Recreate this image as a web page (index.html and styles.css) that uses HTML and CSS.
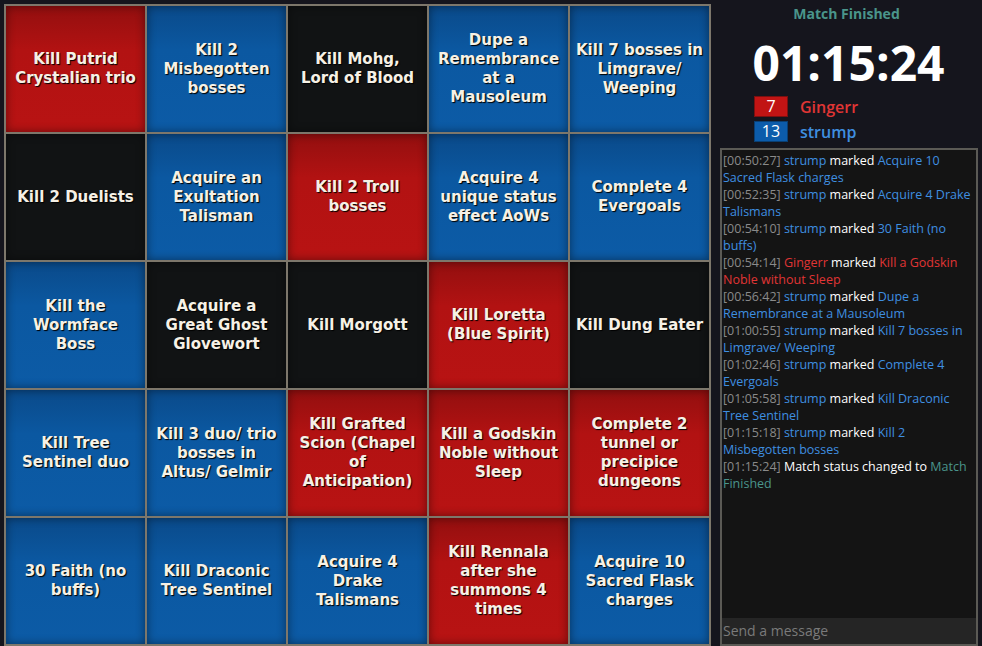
FILE: index.html
```html
<!DOCTYPE html>
<html>
<head>
<meta charset="utf-8">
<link rel="stylesheet" href="styles.css">
</head>
<body>
<div class="board">
  <div class="cell red"><span>Kill Putrid Crystalian trio</span></div>
  <div class="cell blue"><span>Kill 2 Misbegotten bosses</span></div>
  <div class="cell black"><span>Kill Mohg,<br>Lord of Blood</span></div>
  <div class="cell blue"><span>Dupe a Remembrance at a Mausoleum</span></div>
  <div class="cell blue"><span>Kill 7 bosses in Limgrave/ Weeping</span></div>

  <div class="cell black"><span>Kill 2 Duelists</span></div>
  <div class="cell blue"><span>Acquire an Exultation Talisman</span></div>
  <div class="cell red"><span>Kill 2 Troll bosses</span></div>
  <div class="cell blue"><span>Acquire 4 unique status effect AoWs</span></div>
  <div class="cell blue"><span>Complete 4 Evergoals</span></div>

  <div class="cell blue"><span>Kill the Wormface Boss</span></div>
  <div class="cell black"><span>Acquire a Great Ghost Glovewort</span></div>
  <div class="cell black"><span>Kill Morgott</span></div>
  <div class="cell red"><span>Kill Loretta (Blue Spirit)</span></div>
  <div class="cell black"><span>Kill Dung Eater</span></div>

  <div class="cell blue"><span>Kill Tree Sentinel duo</span></div>
  <div class="cell blue"><span>Kill 3 duo/ trio bosses in Altus/ Gelmir</span></div>
  <div class="cell red"><span>Kill Grafted Scion (Chapel of Anticipation)</span></div>
  <div class="cell red"><span>Kill a Godskin Noble without Sleep</span></div>
  <div class="cell red"><span>Complete 2 tunnel or precipice dungeons</span></div>

  <div class="cell blue"><span>30 Faith (no buffs)</span></div>
  <div class="cell blue"><span>Kill Draconic Tree Sentinel</span></div>
  <div class="cell blue"><span>Acquire 4 Drake Talismans</span></div>
  <div class="cell red"><span>Kill Rennala after she summons 4 times</span></div>
  <div class="cell blue"><span>Acquire 10 Sacred Flask charges</span></div>
</div>

<div class="side">
  <div class="status">Match Finished</div>
  <div class="timer">01:15:24</div>
  <div class="scores">
    <div class="score"><span class="badge badge-red">7</span><span class="pname p-red">Gingerr</span></div>
    <div class="score"><span class="badge badge-blue">13</span><span class="pname p-blue">strump</span></div>
  </div>
  <div class="chat">
    <div class="log">
      <div class="entry"><span class="ts">[00:50:27]</span> <span class="c-blue">strump</span> <span class="c-white">marked</span> <span class="c-blue">Acquire 10 Sacred Flask charges</span></div>
      <div class="entry"><span class="ts">[00:52:35]</span> <span class="c-blue">strump</span> <span class="c-white">marked</span> <span class="c-blue">Acquire 4 Drake Talismans</span></div>
      <div class="entry"><span class="ts">[00:54:10]</span> <span class="c-blue">strump</span> <span class="c-white">marked</span> <span class="c-blue">30 Faith (no buffs)</span></div>
      <div class="entry"><span class="ts">[00:54:14]</span> <span class="c-red">Gingerr</span> <span class="c-white">marked</span> <span class="c-red">Kill a Godskin Noble without Sleep</span></div>
      <div class="entry"><span class="ts">[00:56:42]</span> <span class="c-blue">strump</span> <span class="c-white">marked</span> <span class="c-blue">Dupe a Remembrance at a Mausoleum</span></div>
      <div class="entry"><span class="ts">[01:00:55]</span> <span class="c-blue">strump</span> <span class="c-white">marked</span> <span class="c-blue">Kill 7 bosses in Limgrave/ Weeping</span></div>
      <div class="entry"><span class="ts">[01:02:46]</span> <span class="c-blue">strump</span> <span class="c-white">marked</span> <span class="c-blue">Complete 4 Evergoals</span></div>
      <div class="entry"><span class="ts">[01:05:58]</span> <span class="c-blue">strump</span> <span class="c-white">marked</span> <span class="c-blue">Kill Draconic Tree Sentinel</span></div>
      <div class="entry"><span class="ts">[01:15:18]</span> <span class="c-blue">strump</span> <span class="c-white">marked</span> <span class="c-blue">Kill 2 Misbegotten bosses</span></div>
      <div class="entry"><span class="ts">[01:15:24]</span> <span class="c-white">Match status changed to</span> <span class="c-teal">Match Finished</span></div>
    </div>
    <div class="input">Send a message</div>
  </div>
</div>
</body>
</html>
```

FILE: styles.css
```css
html, body {
  margin: 0;
  padding: 0;
  height: 100%;
}
body {
  background: #15151d;
  display: flex;
  overflow: hidden;
  font-family: "Open Sans", "Noto Sans", sans-serif;
}
.board {
  margin: 4px 0 0 4px;
  padding: 2px;
  background: #7d776b;
  display: grid;
  grid-template-columns: repeat(5, 139px);
  grid-template-rows: repeat(5, 126px);
  gap: 2px;
  align-self: flex-start;
}
.cell {
  display: flex;
  align-items: center;
  justify-content: center;
  text-align: center;
  padding: 0 5px;
  font-family: "DejaVu Sans", Verdana, sans-serif;
  font-weight: bold;
  font-size: 15px;
  line-height: 19px;
  color: #f6f1e6;
  text-shadow: 1px 1px 1px #000;
  box-shadow: inset 0 0 10px rgba(0, 0, 0, 0.45);
}
.red {
  background: linear-gradient(to bottom, #930f0f 0%, #b21212 35%, #b81313 100%);
}
.blue {
  background: linear-gradient(to bottom, #0a4a8a 0%, #0b58a1 35%, #0c5ba6 100%);
}
.black {
  background: #111314;
}
.side {
  width: 271px;
  display: flex;
  flex-direction: column;
  height: 646px;
}
.status {
  margin-top: 5px;
  text-align: center;
  font-weight: bold;
  font-size: 14px;
  line-height: 18px;
  color: #4a958b;
}
.timer {
  text-align: center;
  color: #fff;
  font-weight: bold;
  font-size: 48px;
  line-height: 60px;
  margin-top: 10px;
  padding-left: 4px;
}
.scores {
  margin: 3px 0 0 43px;
  display: flex;
  flex-direction: column;
  gap: 4px;
}
.score {
  display: flex;
  align-items: center;
  height: 21px;
}
.badge {
  width: 34px;
  height: 21px;
  box-sizing: border-box;
  text-align: center;
  color: #fff;
  font-size: 16px;
  line-height: 19px;
}
.badge-red {
  background: #c11414;
  border: 1px solid #7a1010;
}
.badge-blue {
  background: #0c5cab;
  border: 1px solid #0a3f73;
}
.pname {
  margin-left: 12px;
  font-size: 16px;
  font-weight: 600;
}
.p-red { color: #e03535; }
.p-blue { color: #3f8fe0; }
.chat {
  margin: 6px 4px 0 9px;
  flex: 1;
  border: 2px solid #5b5a55;
  background: #141414;
  display: flex;
  flex-direction: column;
  min-height: 0;
}
.log {
  flex: 1;
  padding: 2px 1px;
  font-size: 12.5px;
  line-height: 17px;
  color: #fff;
}
.ts { color: #8a8a8a; }
.c-blue { color: #3f8fe0; }
.c-red { color: #e03535; }
.c-white { color: #fff; }
.c-teal { color: #4a958b; }
.input {
  height: 26px;
  background: #252525;
  color: #7a7a7a;
  font-size: 14px;
  line-height: 26px;
  padding-left: 1px;
}
```
